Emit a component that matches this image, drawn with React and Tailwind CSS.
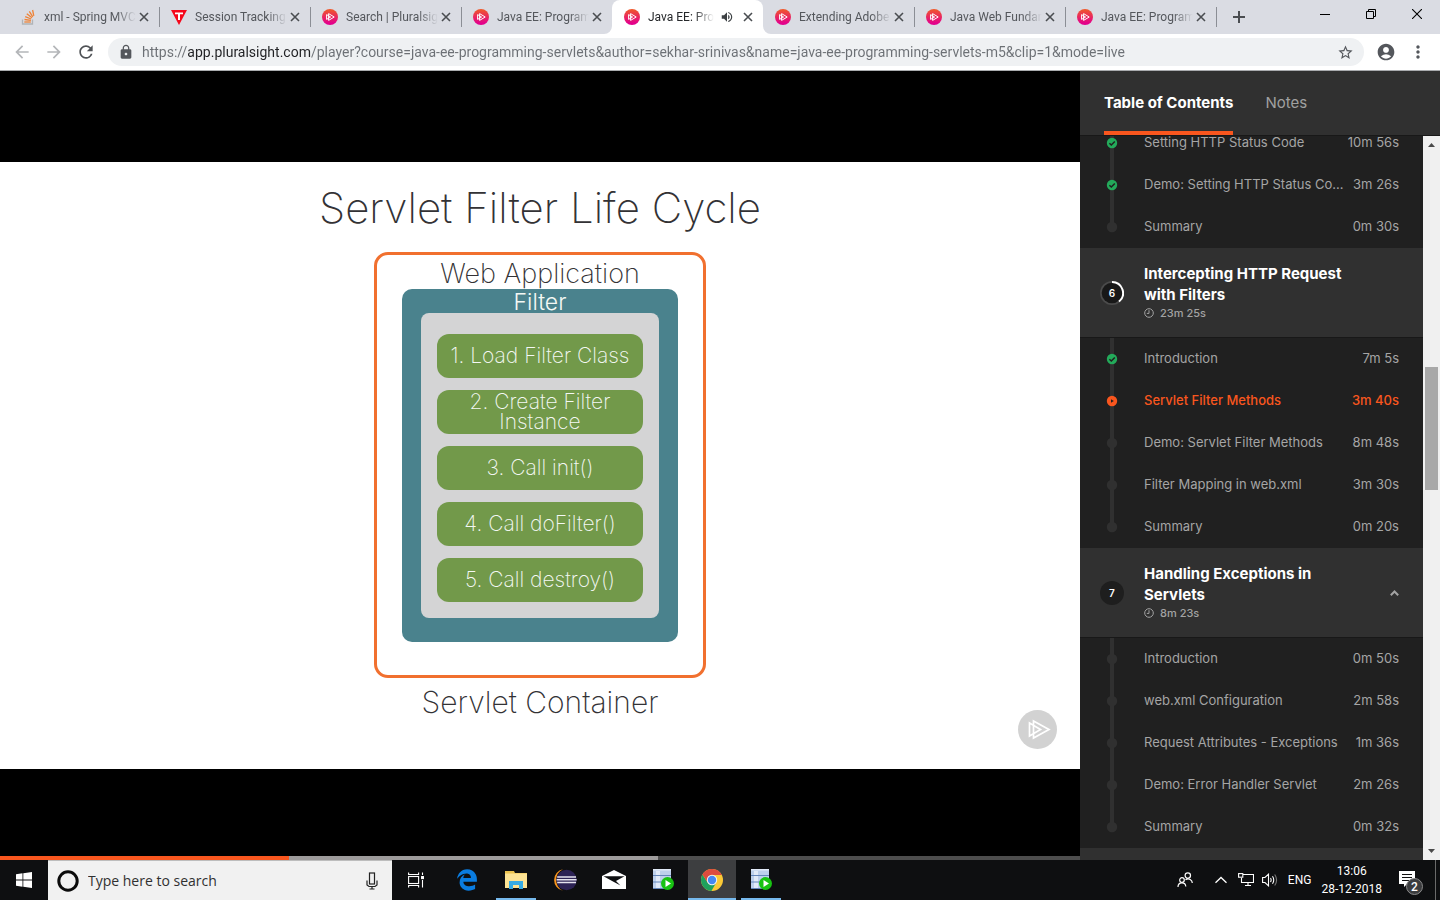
import React from "react";
import { MdStarBorder, MdAccountCircle, MdLock, MdRefresh, MdArrowBack, MdArrowForward, MdMoreVert, MdVolumeUp } from "react-icons/md";
import { FaEdgeLegacy } from "react-icons/fa6";

function PsMark() {
  return (
    <svg width="16" height="16" viewBox="0 0 16 16" className="shrink-0">
      <defs>
        <linearGradient id="psGrad" x1="0" y1="0" x2="0" y2="1">
          <stop offset="0" stopColor="#f05a28" />
          <stop offset="0.9" stopColor="#e3008c" />
        </linearGradient>
      </defs>
      <circle cx="8" cy="8" r="8" fill="url(#psGrad)" />
      <path d="M6.6 4.6 L12.2 8 L6.6 11.4 Z M4.6 5.6 L8.6 8 L4.6 10.4 Z" fill="none" stroke="#fff" strokeWidth="1" />
    </svg>
  );
}

function StackMark() {
  return (
    <svg width="16" height="16" viewBox="0 0 16 16" className="shrink-0">
      <path d="M2.5 10.5 V15 H12.5 V10.5" fill="none" stroke="#b0b3b7" strokeWidth="1.3" />
      <g stroke="#ee8236" strokeWidth="1.3" fill="none">
        <path d="M4.3 13 H10.8" />
        <path d="M4.5 10.5 L10.9 11.4" />
        <path d="M5.2 7.6 L11.2 10" />
        <path d="M6.8 4.7 L12 8.8" />
        <path d="M9.3 2.4 L12.8 7.8" />
        <path d="M12.6 1 L13.8 6.8" />
      </g>
    </svg>
  );
}

function TMark() {
  return (
    <svg width="16" height="16" viewBox="0 0 16 16" className="shrink-0">
      <path d="M0 1 H16 L8 16 Z" fill="#f5081b" />
      <path d="M4 3.4 H12 V5.2 H9 V11 H7 V5.2 H4 Z" fill="#fff" />
    </svg>
  );
}

function CloseX() {
  return (
    <svg width="16" height="16" viewBox="0 0 16 16">
      <path d="M4 4 L12 12 M12 4 L4 12" stroke="#4a4d51" strokeWidth="1.6" />
    </svg>
  );
}

const tabs = [
  { title: "xml - Spring MVC", mark: <StackMark /> },
  { title: "Session Tracking", mark: <TMark />, sep: true },
  { title: "Search | Pluralsight", mark: <PsMark />, sep: true },
  { title: "Java EE: Programming", mark: <PsMark />, sep: true },
  { title: "Java EE: Programming", mark: <PsMark />, active: true },
  { title: "Extending Adobe", mark: <PsMark /> },
  { title: "Java Web Fundamentals", mark: <PsMark />, sep: true },
  { title: "Java EE: Programming", mark: <PsMark />, sep: true },
];

function Tab({ title, mark, sep, active }) {
  return (
    <div className={"relative flex h-[34px] w-[151px] items-center pr-[7px] " + (active ? "rounded-t-lg bg-white" : "")}>
      {active && (
        <svg className="absolute -left-2 bottom-0" width="8" height="8" viewBox="0 0 8 8">
          <path d="M8 0 V8 H0 A8 8 0 0 0 8 0 Z" fill="#fff" />
        </svg>
      )}
      {active && (
        <svg className="absolute -right-2 bottom-0" width="8" height="8" viewBox="0 0 8 8">
          <path d="M0 0 V8 H8 A8 8 0 0 1 0 0 Z" fill="#fff" />
        </svg>
      )}
      <span className={"mr-[11px] h-5 w-px shrink-0 " + (sep ? "bg-[#8b8e95]" : "")} />
      {mark}
      <a
        href="#"
        className={
          "ml-2 min-w-0 flex-1 overflow-hidden whitespace-nowrap text-[12px] leading-4 [mask-image:linear-gradient(to_right,black_calc(100%-20px),transparent)] " +
          (active ? "text-[#26282b]" : "text-[#54575c]")
        }
      >
        {title}
      </a>
      {active && <MdVolumeUp size={14} color="#3c4043" className="mr-0.5 ml-1.5 shrink-0" />}
      <button aria-label={"Close " + title} className={"shrink-0 " + (active ? "ml-1" : "")}>
        <CloseX />
      </button>
    </div>
  );
}

function Browser() {
  return (
    <header className="shrink-0 font-['Roboto','Open_Sans',sans-serif]">
      <div className="flex h-[34px] bg-[#dadce3] pl-2">
        {tabs.map((t, i) => (
          <Tab key={i} {...t} />
        ))}
        <span className="mt-[7px] h-5 w-px bg-[#8b8e95]" />
        <button aria-label="New tab" className="ml-3.5">
          <svg width="16" height="16" viewBox="0 0 16 16">
            <path d="M8 2 V14 M2 8 H14" stroke="#4a4d51" strokeWidth="2" />
          </svg>
        </button>
        <div className="ml-auto flex h-7">
          <button aria-label="Minimize" className="flex w-[46px] items-center justify-center">
            <svg width="10" height="10"><path d="M0 5.5 H10" stroke="#000" /></svg>
          </button>
          <button aria-label="Restore" className="flex w-[46px] items-center justify-center">
            <svg width="10" height="10" fill="none" stroke="#000"><path d="M0.5 2.5 H7.5 V9.5 H0.5 Z M2.5 2.5 V0.5 H9.5 V7.5 H7.5" /></svg>
          </button>
          <button aria-label="Close window" className="flex w-[46px] items-center justify-center">
            <svg width="10" height="10"><path d="M0 0 L10 10 M10 0 L0 10" stroke="#000" strokeWidth="1.1" /></svg>
          </button>
        </div>
      </div>
      <div className="flex h-[37px] items-center border-b border-[#a9abae] bg-white pr-3 pl-3">
        <button aria-label="Back" className="mr-3"><MdArrowBack size={20} color="#b4b6b9" /></button>
        <button aria-label="Forward" className="mr-3"><MdArrowForward size={20} color="#b4b6b9" /></button>
        <button aria-label="Reload" className="mr-3"><MdRefresh size={20} color="#4f5256" /></button>
        <div className="flex h-7 min-w-0 flex-1 items-center rounded-full bg-[#eff1f3] px-2.5">
          <MdLock size={16} color="#54575c" className="shrink-0" />
          <input
            type="text"
            aria-label="Address"
            defaultValue="https://app.pluralsight.com/player?course=java-ee-programming-servlets&author=sekhar-srinivas&name=java-ee-programming-servlets-m5&clip=1&mode=live"
            className="ml-2 min-w-0 flex-1 bg-[linear-gradient(to_right,#6c7075_45px,#202124_45px,#202124_169px,#6c7075_169px)] bg-clip-text text-[14px] leading-5 text-transparent outline-none"
          />
          <button aria-label="Bookmark" className="shrink-0"><MdStarBorder size={17} color="#54575c" /></button>
        </div>
        <button aria-label="Profile" className="ml-3"><MdAccountCircle size={20} color="#54575c" /></button>
        <button aria-label="Menu" className="ml-3"><MdMoreVert size={20} color="#54575c" /></button>
      </div>
    </header>
  );
}

const steps = ["1. Load Filter Class", "2. Create Filter Instance", "3. Call init()", "4. Call doFilter()", "5. Call destroy()"];

function Player() {
  return (
    <main className="relative flex min-w-0 flex-1 items-center bg-black">
      <section className="relative flex aspect-video w-full flex-col items-center bg-white pt-5 font-['Inter',sans-serif] font-extralight text-[#333235]">
        <h1 className="text-[42px] leading-[52px]">Servlet Filter Life Cycle</h1>
        <div className="mt-[18px] flex h-[426px] w-[332px] flex-col items-center rounded-[14px] border-[3px] border-[#f1702f]">
          <p className="mt-1 text-[27px] leading-[30px]">Web Application</p>
          <div className="flex h-[353px] w-[276px] flex-col items-center rounded-[10px] bg-[#4a828d] font-light text-[#f4f8f4]">
            <p className="pt-0.5 text-[23px] leading-[22px]">Filter</p>
            <ol className="flex h-[305px] w-[238px] flex-col items-center gap-3 rounded-lg bg-[#d4d4d5] pt-[21px]">
              {steps.map((s) => (
                <li key={s} className="flex h-11 w-[206px] items-center justify-center rounded-xl bg-[#72994a] px-6 text-center text-[21px] leading-5 font-extralight first:px-0">
                  {s}
                </li>
              ))}
            </ol>
          </div>
        </div>
        <p className="mt-2 text-[30px] leading-8">Servlet Container</p>
        <svg className="absolute right-[23px] bottom-5" width="39" height="39" viewBox="0 0 39 39">
          <circle cx="19.5" cy="19.5" r="19.5" fill="#d2d2d2" />
          <path d="M15.5 11 L31 19.5 L15.5 28 Z M11.5 13 L22.5 19.5 L11.5 26 Z" fill="none" stroke="#fff" strokeWidth="1.7" />
        </svg>
      </section>
      <div className="absolute inset-x-0 bottom-0 flex h-1 bg-[#4d4d4d]">
        <span className="w-[289px] bg-[#f9561e]" />
        <span className="w-[369px] bg-[#9d9b9b]" />
      </div>
    </main>
  );
}

const sections = [
  {
    clips: [
      ["Setting HTTP Status Code", "10m 56s", "done"],
      ["Demo: Setting HTTP Status Codes", "3m 26s", "done"],
      ["Summary", "0m 30s"],
    ],
  },
  {
    number: "6",
    title: "Intercepting HTTP Request with Filters",
    time: "23m 25s",
    progress: true,
    clips: [
      ["Introduction", "7m 5s", "done"],
      ["Servlet Filter Methods", "3m 40s", "playing"],
      ["Demo: Servlet Filter Methods", "8m 48s"],
      ["Filter Mapping in web.xml", "3m 30s"],
      ["Summary", "0m 20s"],
    ],
  },
  {
    number: "7",
    title: "Handling Exceptions in Servlets",
    time: "8m 23s",
    open: true,
    clips: [
      ["Introduction", "0m 50s"],
      ["web.xml Configuration", "2m 58s"],
      ["Request Attributes - Exceptions", "1m 36s"],
      ["Demo: Error Handler Servlet", "2m 26s"],
      ["Summary", "0m 32s"],
    ],
  },
];

function Dot({ state, last }) {
  return (
    <svg width="24" height="42" viewBox="0 0 24 42" className="shrink-0">
      <rect x="10" y="0" width="4" height={last ? 21 : 42} fill="#303030" />
      <circle cx="12" cy="21" r="5.2" fill={state === "done" ? "#23aa5a" : state === "playing" ? "#f9561e" : "#303030"} />
      {state === "done" && <path d="M9.4 21.2 L11.3 23 L14.8 19.4" fill="none" stroke="#202020" strokeWidth="1.5" />}
      {state === "playing" && <path d="M11 19.2 L13.8 21 L11 22.8 Z" fill="#202020" />}
    </svg>
  );
}

function Section({ number, title, time, progress, open, clips }) {
  return (
    <section>
      {title && (
        <div className="flex min-h-[90px] items-center border-b border-[#181818] bg-[#303030] pr-6 pl-5">
          <svg width="24" height="24" viewBox="0 0 24 24" className="shrink-0">
            <circle cx="12" cy="12" r="12" fill={progress ? "#4b4b4b" : "#1e1e1e"} />
            {progress && <circle cx="12" cy="12" r="10.3" fill="#181818" />}
            {progress && <path d="M12 1 A11 11 0 0 1 19 20.5" fill="none" stroke="#fff" strokeWidth="2" />}
            <text x="12" y="15.5" textAnchor="middle" fill="#fff" className="text-[10px] font-semibold">{number}</text>
          </svg>
          <div className="ml-5 w-[220px] pb-0.5">
            <h2 className="text-[15px] leading-[21px] font-bold text-white">{title}</h2>
            <p className="flex items-center gap-1.5 text-[11px] leading-4 font-medium text-[#a3a3a3]">
              <svg width="10" height="10" viewBox="0 0 10 10" fill="none" stroke="#a3a3a3">
                <circle cx="5" cy="5" r="4.3" />
                <path d="M5 2.2 V5.4 H2.8" />
              </svg>
              {time}
            </p>
          </div>
          {open && (
            <button aria-label="Collapse section" className="ml-auto">
              <svg width="9" height="6" viewBox="0 0 9 6"><path d="M0.8 5.2 L4.5 1.5 L8.2 5.2" fill="none" stroke="#a3a3a3" strokeWidth="2" /></svg>
            </button>
          )}
        </div>
      )}
      <ul>
        {clips.map(([name, len, state], i) => (
          <li key={i}>
            <a
              href="#"
              className={"flex h-[42px] items-center pr-6 pl-5 text-[13px] leading-5 " + (state === "playing" ? "font-medium text-[#f9561e]" : "text-[#a5a5a5]")}
            >
              <Dot state={state} last={i === clips.length - 1} />
              <span className="mr-1.5 ml-5 min-w-0 flex-1 truncate pb-0.5">{name}</span>
              <span className="shrink-0 pb-0.5">{len}</span>
            </a>
          </li>
        ))}
      </ul>
    </section>
  );
}

function Sidebar() {
  return (
    <aside className="flex w-[360px] shrink-0 flex-col bg-[#202020] font-['Inter',sans-serif]">
      <nav className="flex h-[65px] shrink-0 gap-8 border-b border-[#181818] bg-[#303030] pl-6 text-[15px] leading-5">
        <button className="border-b-4 border-[#f9561e] pt-1 font-bold text-white">Table of Contents</button>
        <button className="border-b-4 border-transparent pt-1 text-[#a0a0a0]">Notes</button>
      </nav>
      <div className="flex min-h-0 flex-1">
        <div className="min-w-0 flex-1 overflow-hidden">
          <div className="-mt-3.5">
            {sections.map((s, i) => (
              <Section key={i} {...s} />
            ))}
            <div className="h-[90px] bg-[#303030]" />
          </div>
        </div>
        <div className="flex w-[17px] flex-col items-center bg-[#f0f0f0]">
          <svg width="17" height="17" viewBox="0 0 17 17"><path d="M5 11 L8.5 7 L12 11 Z" fill="#4a4a4a" /></svg>
          <div className="mt-[214px] h-[123px] w-[13px] bg-[#a8a8a8]" />
          <svg className="mt-auto" width="17" height="17" viewBox="0 0 17 17"><path d="M5 6 L8.5 10 L12 6 Z" fill="#4a4a4a" /></svg>
        </div>
      </div>
    </aside>
  );
}

function ServerIcon() {
  return (
    <svg width="24" height="24" viewBox="0 0 24 24">
      <rect x="2" y="1" width="18" height="20" fill="#bdd0ec" />
      <path d="M2 1 H20 V2.5 H2 Z M5 3 H9 V20 H5 Z" fill="#e1eaf8" />
      <path d="M2 7.5 H20 M2 14 H20 M2 20.5 H20" stroke="#6486ba" strokeWidth="1.2" />
      <circle cx="16.5" cy="15.5" r="6.5" fill="#18c312" />
      <path d="M14.5 12 L20 15.5 L14.5 19 Z" fill="#fff" />
    </svg>
  );
}

function ChromeIcon() {
  return (
    <svg width="24" height="24" viewBox="0 0 24 24">
      <circle cx="12" cy="12" r="11" fill="#fbc936" />
      <path d="M12 12 L2.47 6.5 A11 11 0 0 1 21.8 7 L12 7 Z" fill="#dd4b3e" />
      <path d="M2.47 6.5 A11 11 0 0 0 11.4 23 L16.3 14.5 L12 12 L7.7 14.5 Z" fill="#1fa15d" />
      <path d="M2.47 6.5 L7.7 14.5 L12 12 L12 7 Z" fill="#dd4b3e" />
      <circle cx="12" cy="12" r="5.2" fill="#f4f4f4" />
      <circle cx="12" cy="12" r="4.2" fill="#4688f1" />
    </svg>
  );
}

const apps = [
  { name: "Edge", icon: <FaEdgeLegacy size={22} color="#0a7ce0" /> },
  {
    name: "File Explorer",
    running: true,
    icon: (
      <svg width="24" height="24" viewBox="0 0 24 24">
        <path d="M1 3 H10 L11 5 H23 V20 H1 Z" fill="#ecc34f" />
        <rect x="1" y="5.5" width="22" height="14.5" fill="#fde394" />
        <path d="M5 21 V13 H19 V21 H15 V17 H9 V21 Z" fill="#36abe4" />
      </svg>
    ),
  },
  {
    name: "Eclipse",
    icon: (
      <svg width="24" height="24" viewBox="0 0 24 24">
        <path d="M10 1.2 A11 11 0 0 0 10 22.8 A12 12 0 0 1 10 1.2 Z" fill="#f7941e" />
        <circle cx="13.6" cy="12" r="10.2" fill="#2c2255" />
        <path d="M4.2 9 H23 M3.6 11.7 H23.6 M4.2 14.4 H23" stroke="#e4e2ee" strokeWidth="1.5" />
      </svg>
    ),
  },
  {
    name: "Mail",
    icon: (
      <svg width="24" height="24" viewBox="0 0 24 24">
        <path d="M0 8 L12 2 L24 8 V21 H0 Z" fill="#fff" />
        <path d="M1.5 8.3 H22.5 L14 13 L18.5 17.5 L11 13.5 Z" fill="#0e0f11" />
      </svg>
    ),
  },
  { name: "Server", icon: <ServerIcon /> },
  { name: "Chrome", running: true, active: true, icon: <ChromeIcon /> },
  { name: "Server 2", running: true, icon: <ServerIcon /> },
];

function Taskbar() {
  return (
    <footer className="flex h-10 shrink-0 bg-[#0e0f11] text-white">
      <button aria-label="Start" className="flex w-12 items-center justify-center">
        <svg width="16" height="16" viewBox="0 0 16 16">
          <path d="M0 2.2 L6.5 1.3 V7.6 H0 Z M7.3 1.2 L16 0 V7.6 H7.3 Z M0 8.4 H6.5 V14.7 L0 13.8 Z M7.3 8.4 H16 V16 L7.3 14.8 Z" fill="#fff" />
        </svg>
      </button>
      <label className="flex w-[344px] items-center border-t border-[#bdbdbd] bg-[#f1f1f1] pr-3 pl-2 font-['Open_Sans','Noto_Sans',sans-serif]">
        <svg width="24" height="24" viewBox="0 0 24 24"><circle cx="12" cy="12" r="9.2" fill="none" stroke="#0b0b0b" strokeWidth="3" /></svg>
        <input
          aria-label="Search"
          placeholder="Type here to search"
          className="ml-2 min-w-0 flex-1 bg-transparent text-[14px] leading-5 outline-none placeholder:text-[#303030]"
        />
        <svg width="16" height="18" viewBox="0 0 16 18" fill="none" stroke="#222" strokeWidth="1.2">
          <rect x="5.5" y="1" width="5" height="11" />
          <path d="M3 8.5 V13 L5 14.5 H11 L13 13 V8.5 M8 14.5 V17 M5.5 17 H10.5" />
        </svg>
      </label>
      <button aria-label="Task view" className="flex w-12 items-center justify-center">
        <svg width="16" height="16" viewBox="0 0 16 16" fill="none" stroke="#fff" strokeWidth="1.1">
          <rect x="0.6" y="4.5" width="10" height="7" />
          <path d="M0.6 0.5 V2.5 H10.6 V0.5 M0.6 15.5 V13.5 H10.6 V15.5 M14.5 0.5 V3 M14.5 8 V15.5" />
          <rect x="13.6" y="4.6" width="2" height="2" fill="#fff" />
        </svg>
      </button>
      <div className="ml-[3px] flex gap-px">
        {apps.map((a) => (
          <button
            key={a.name}
            aria-label={a.name}
            className={"relative flex w-12 items-center justify-center " + (a.active ? "bg-[#3d3e40]" : "")}
          >
            {a.icon}
            {a.running && <span className={"absolute bottom-0 h-0.5 bg-[#76b9ed] " + (a.active ? "inset-x-0" : "inset-x-1")} />}
          </button>
        ))}
      </div>
      <div className="ml-auto flex items-center font-['Roboto','Open_Sans',sans-serif] text-[12px]">
        <svg width="16" height="16" viewBox="0 0 16 16" fill="none" stroke="#fff" strokeWidth="1.2">
          <circle cx="10.8" cy="3.6" r="2.7" />
          <circle cx="5" cy="8" r="2.3" />
          <path d="M1 15 C1 9.5 8.5 9.5 8.8 14.5 M8.5 7.8 C12 5.5 15.3 8 15.3 11" />
        </svg>
        <svg className="ml-[21px]" width="14" height="8" viewBox="0 0 14 8"><path d="M1.5 6.8 L7 1.5 L12.5 6.8" fill="none" stroke="#fff" strokeWidth="1.3" /></svg>
        <svg className="ml-2.5" width="16" height="14" viewBox="0 0 16 14" fill="none" stroke="#fff" strokeWidth="1.1">
          <path d="M5 1.5 H15.5 V9.5 H3.5 V5 M7 12.5 H13 M10 9.5 V12.5" />
          <rect x="0.6" y="0.6" width="4.2" height="3.6" />
        </svg>
        <svg className="ml-2" width="16" height="14" viewBox="0 0 16 14" fill="none" stroke="#fff" strokeWidth="1.1">
          <path d="M0.6 4.5 H3 L6.5 1.2 V12.8 L3 9.5 H0.6 Z M8.5 5 Q9.8 7 8.5 9 M10.5 3.2 Q13 7 10.5 10.8" />
          <path d="M12.7 1.5 Q16.5 7 12.7 12.5" stroke="#777" />
        </svg>
        <span className="ml-2.5">ENG</span>
        <time className="ml-2.5 text-center leading-[18px]">
          13:06
          <br />
          28-12-2018
        </time>
        <button aria-label="Notifications" className="relative ml-[15px] w-7 pt-1.5">
          <svg width="28" height="26" viewBox="0 0 28 26">
            <path d="M2 1 H18 V14 H10 L7 17 V14 H2 Z" fill="#fff" />
            <path d="M5 4.5 H15 M5 7.5 H15 M5 10.5 H12" stroke="#111" />
            <circle cx="17.5" cy="16.5" r="8" fill="#3b3c3e" stroke="#8a8a8a" />
            <text x="17.5" y="20.5" textAnchor="middle" fill="#fff" className="text-[12px] font-medium">2</text>
          </svg>
        </button>
        <span className="ml-2.5 h-full w-px bg-[#6a6a6a]" />
        <span className="w-1" />
      </div>
    </footer>
  );
}

export default function App() {
  return (
    <div className="flex h-screen flex-col overflow-hidden">
      <Browser />
      <div className="flex min-h-0 flex-1">
        <Player />
        <Sidebar />
      </div>
      <Taskbar />
    </div>
  );
}
